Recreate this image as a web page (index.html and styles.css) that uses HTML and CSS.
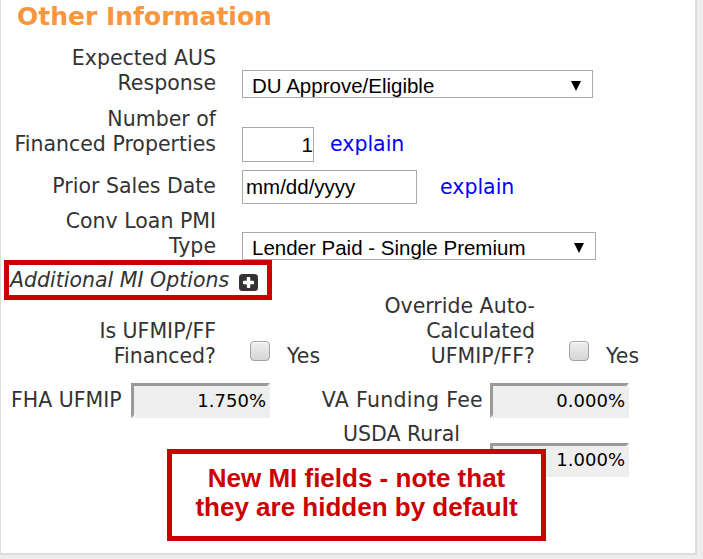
FILE: index.html
```html
<!DOCTYPE html>
<html lang="en">
<head>
<meta charset="utf-8">
<title>Other Information</title>
<link rel="stylesheet" href="styles.css">
</head>
<body>
<div class="panel">
  <h2 class="panel-title">Other Information</h2>

  <div class="field-row row-aus">
    <div class="field-label">Expected AUS<br>Response</div>
    <div class="field-control">
      <div class="select select-aus"><span>DU Approve/Eligible</span><svg class="select-arrow" width="10" height="10" viewBox="0 0 10 10"><polygon points="0,0 10,0 5,10"/></svg></div>
    </div>
  </div>

  <div class="field-row row-props">
    <div class="field-label">Number of<br>Financed Properties</div>
    <div class="field-control">
      <div class="text-input num-input">1</div>
      <a class="explain" href="#">explain</a>
    </div>
  </div>

  <div class="field-row row-date">
    <div class="field-label">Prior Sales Date</div>
    <div class="field-control">
      <div class="text-input date-input">mm/dd/yyyy</div>
      <a class="explain explain-wide" href="#">explain</a>
    </div>
  </div>

  <div class="field-row row-pmi">
    <div class="field-label">Conv Loan PMI<br>Type</div>
    <div class="field-control">
      <div class="select select-pmi"><span>Lender Paid - Single Premium</span><svg class="select-arrow" width="10" height="10" viewBox="0 0 10 10"><polygon points="0,0 10,0 5,10"/></svg></div>
    </div>
  </div>

  <div class="mi-row">
    <span class="mi-toggle"><em>Additional MI Options</em><svg class="mi-icon" width="19" height="17" viewBox="0 0 19 17"><rect x="0" y="0" width="19" height="17" rx="3.5" fill="#333"/><rect x="4" y="6.75" width="11" height="3.5" rx="0.8" fill="#fff"/><rect x="7.75" y="3" width="3.5" height="11" rx="0.8" fill="#fff"/></svg></span>
  </div>

  <div class="check-row">
    <div class="check-group check-group-left">
      <div class="field-label">Is UFMIP/FF<br>Financed?</div>
      <span class="checkbox"></span>
      <span class="check-text">Yes</span>
    </div>
    <div class="check-group">
      <div class="check-label">Override Auto-<br>Calculated<br>UFMIP/FF?</div>
      <span class="checkbox"></span>
      <span class="check-text">Yes</span>
    </div>
  </div>

  <div class="fee-grid">
    <div class="fee-label fee-label-fha">FHA UFMIP</div>
    <div class="fee-input">1.750%</div>
    <div class="fee-label fee-label-va">VA Funding Fee</div>
    <div class="fee-input">0.000%</div>

    <div class="fee-label fee-label-usda">USDA Rural</div>
    <div class="fee-input fee-input-usda">1.000%</div>
  </div>

  <div class="callout">New MI fields - note that<br>they are hidden by default</div>
</div>
</body>
</html>
```

FILE: styles.css
```css
html, body {
  margin: 0;
  padding: 0;
}

body {
  background: #eeeeee;
  font-family: "DejaVu Sans", Verdana, sans-serif;
  color: #333333;
}

.panel {
  position: relative;
  box-sizing: border-box;
  width: 697px;
  height: 555px;
  background: #ffffff;
  border-left: 1px solid #dddddd;
  border-right: 2px solid #dddddd;
  border-bottom: 2px solid #dddddd;
  padding: 0 0 0 9px;
}

.panel-title {
  margin: 0 0 0 7px;
  padding-top: 2px;
  font-size: 25px;
  line-height: 30px;
  font-weight: bold;
  color: #f7963c;
}

/* form rows */
.field-row {
  display: flex;
  align-items: flex-end;
}

.field-label {
  flex: none;
  width: 206px;
  text-align: right;
  font-size: 20.5px;
  line-height: 25px;
}

.field-control {
  margin-left: 26px;
  display: flex;
  align-items: center;
}

.row-aus { margin-top: 14px; }
.row-aus .field-label { margin-bottom: 2px; }

.row-props { margin-top: 9px; }
.row-props .field-label { margin-bottom: 5px; }

.row-date { margin-top: 8px; }
.row-date .field-label { margin-bottom: 5px; }

.row-pmi { margin-top: 5px; }
.row-pmi .field-label { margin-bottom: 1px; }

/* select look-alike */
.select {
  box-sizing: border-box;
  height: 28px;
  border: 1px solid #a9a9a9;
  background: #ffffff;
  display: flex;
  align-items: center;
  justify-content: space-between;
  padding: 3px 11px 0 9px;
  font-family: "Liberation Sans", Arial, sans-serif;
  font-size: 20.5px;
  line-height: 23px;
  color: #000000;
}

.select-aus { width: 351px; }
.select-pmi { width: 354px; }

.select-arrow {
  flex: none;
  display: block;
  fill: #000000;
}

/* text inputs */
.text-input {
  box-sizing: border-box;
  border: 1px solid #a9a9a9;
  background: #ffffff;
  display: flex;
  align-items: center;
  font-family: "Liberation Sans", Arial, sans-serif;
  font-size: 20.5px;
  color: #000000;
}

.num-input {
  width: 72px;
  height: 35px;
  justify-content: flex-end;
  padding-right: 0;
}

.date-input {
  width: 175px;
  height: 34px;
  padding-left: 3px;
}

.explain {
  margin-left: 16px;
  font-size: 20.5px;
  line-height: 25px;
  color: #0000ff;
  text-decoration: none;
}

.explain-wide { margin-left: 23px; }

/* Additional MI options */
.mi-row {
  margin-top: 8px;
  line-height: 25px;
  font-size: 20.5px;
}

.mi-toggle {
  position: relative;
  display: inline-flex;
  align-items: center;
  vertical-align: top;
  height: 25px;
}

.mi-toggle em {
  font-style: italic;
}

.mi-icon {
  display: block;
  margin-left: 10px;
  margin-top: 3px;
}

.mi-toggle::after {
  content: "";
  position: absolute;
  top: -8px;
  bottom: -7px;
  left: -6px;
  right: -14px;
  border: 5px solid #cc0000;
}

/* checkbox row */
.check-row {
  display: flex;
  margin-top: 1px;
}

.check-group {
  display: flex;
  align-items: flex-end;
}

.check-group-left {
  width: 365px;
}

.check-label {
  flex: none;
  width: 160px;
  text-align: right;
  font-size: 20.5px;
  line-height: 25px;
}

.checkbox {
  flex: none;
  box-sizing: border-box;
  width: 20px;
  height: 20px;
  margin-left: 34px;
  margin-bottom: 8px;
  border: 1px solid #a3a3a3;
  border-radius: 4px;
  background: linear-gradient(#eeeeee, #d6d6d6);
  box-shadow: inset 0 1px 0 #ffffff;
}

.check-text {
  margin-left: 17px;
  font-size: 20.5px;
  line-height: 25px;
}

/* fee grid */
.fee-grid {
  display: grid;
  grid-template-columns: 121px 139px 220px 139px;
  row-gap: 4px;
  margin-top: 14px;
  align-items: end;
}

.fee-label {
  font-size: 20.5px;
  line-height: 25px;
}

.fee-label-fha {
  grid-column: 1;
  align-self: center;
  padding-left: 1px;
}

.fee-label-va {
  grid-column: 3;
  align-self: center;
  text-align: right;
  padding: 0 7px 0 45px;
  letter-spacing: 0.3px;
}

.fee-label-usda {
  grid-column: 3;
  text-align: center;
  padding: 0 7px 0 50px;
  height: 50px;
  margin-bottom: 5px;
}

.fee-input {
  box-sizing: border-box;
  height: 35px;
  border-style: solid;
  border-width: 3px;
  border-color: #9a9a9a #eeeeee #eeeeee #9a9a9a;
  background: #eeeeee;
  text-align: right;
  padding-right: 1px;
  font-size: 18px;
  line-height: 29px;
  color: #000000;
}

.fee-input-usda {
  grid-column: 4;
  height: 34px;
  line-height: 28px;
}

/* annotation */
.callout {
  position: absolute;
  left: 166px;
  top: 449px;
  box-sizing: border-box;
  width: 379px;
  height: 92px;
  padding-top: 10px;
  border: 5px solid #cc0000;
  background: #ffffff;
  text-align: center;
  font-family: "Liberation Sans", Arial, sans-serif;
  font-weight: bold;
  font-size: 26px;
  line-height: 29px;
  color: #cc0000;
}
```
